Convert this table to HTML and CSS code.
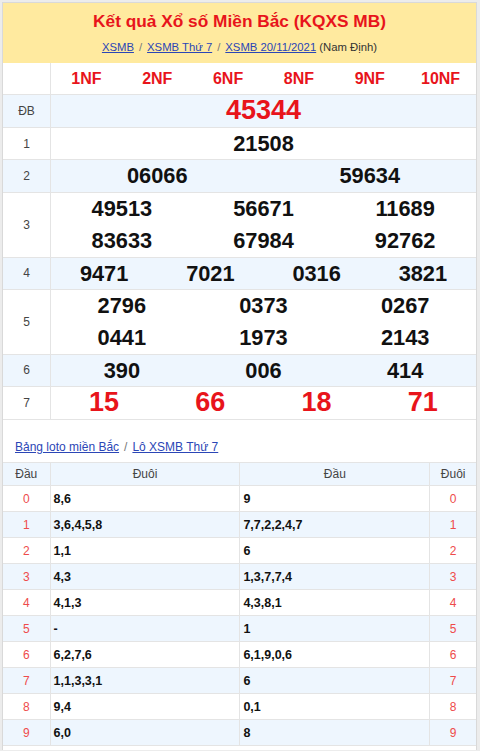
FILE: index.html
```html
<!DOCTYPE html>
<html lang="vi">
<head>
<meta charset="utf-8">
<title>Kết quả Xổ số Miền Bắc</title>
<link rel="stylesheet" href="styles.css">
</head>
<body>
<div class="wrap">
  <div class="head">
    <h1 class="title">Kết quả Xổ số Miền Bắc (KQXS MB)</h1>
    <div class="crumbs"><a href="#">XSMB</a><span class="sep">/</span><a href="#">XSMB Thứ 7</a><span class="sep">/</span><a href="#">XSMB 20/11/2021</a> (Nam Định)</div>
  </div>

  <table class="kq">
    <tr class="nf">
      <td class="lbl"></td>
      <td class="val"><div class="nums c6"><span>1NF</span><span>2NF</span><span>6NF</span><span>8NF</span><span>9NF</span><span>10NF</span></div></td>
    </tr>
    <tr class="alt">
      <td class="lbl">ĐB</td>
      <td class="val"><div class="nums c1 big"><span>45344</span></div></td>
    </tr>
    <tr>
      <td class="lbl">1</td>
      <td class="val"><div class="nums c1"><span>21508</span></div></td>
    </tr>
    <tr class="alt">
      <td class="lbl">2</td>
      <td class="val"><div class="nums c2"><span>06066</span><span>59634</span></div></td>
    </tr>
    <tr>
      <td class="lbl">3</td>
      <td class="val"><div class="nums c3"><span>49513</span><span>56671</span><span>11689</span><span>83633</span><span>67984</span><span>92762</span></div></td>
    </tr>
    <tr class="alt">
      <td class="lbl">4</td>
      <td class="val"><div class="nums c4"><span>9471</span><span>7021</span><span>0316</span><span>3821</span></div></td>
    </tr>
    <tr>
      <td class="lbl">5</td>
      <td class="val"><div class="nums c3"><span>2796</span><span>0373</span><span>0267</span><span>0441</span><span>1973</span><span>2143</span></div></td>
    </tr>
    <tr class="alt">
      <td class="lbl">6</td>
      <td class="val"><div class="nums c3"><span>390</span><span>006</span><span>414</span></div></td>
    </tr>
    <tr>
      <td class="lbl">7</td>
      <td class="val"><div class="nums c4 big"><span>15</span><span>66</span><span>18</span><span>71</span></div></td>
    </tr>
  </table>

  <div class="loto-links"><a href="#">Bảng loto miền Bắc</a><span class="sep">/</span><a href="#">Lô XSMB Thứ 7</a></div>

  <table class="loto">
    <tr class="hd"><td class="d">Đầu</td><td class="t">Đuôi</td><td class="t">Đầu</td><td class="d">Đuôi</td></tr>
    <tr><td class="d">0</td><td class="v">8,6</td><td class="v">9</td><td class="d">0</td></tr>
    <tr class="alt"><td class="d">1</td><td class="v">3,6,4,5,8</td><td class="v">7,7,2,2,4,7</td><td class="d">1</td></tr>
    <tr><td class="d">2</td><td class="v">1,1</td><td class="v">6</td><td class="d">2</td></tr>
    <tr class="alt"><td class="d">3</td><td class="v">4,3</td><td class="v">1,3,7,7,4</td><td class="d">3</td></tr>
    <tr><td class="d">4</td><td class="v">4,1,3</td><td class="v">4,3,8,1</td><td class="d">4</td></tr>
    <tr class="alt"><td class="d">5</td><td class="v">-</td><td class="v">1</td><td class="d">5</td></tr>
    <tr><td class="d">6</td><td class="v">6,2,7,6</td><td class="v">6,1,9,0,6</td><td class="d">6</td></tr>
    <tr class="alt"><td class="d">7</td><td class="v">1,1,3,3,1</td><td class="v">6</td><td class="d">7</td></tr>
    <tr><td class="d">8</td><td class="v">9,4</td><td class="v">0,1</td><td class="d">8</td></tr>
    <tr class="alt"><td class="d">9</td><td class="v">6,0</td><td class="v">8</td><td class="d">9</td></tr>
  </table>
</div>
</body>
</html>
```

FILE: styles.css
```css
html, body {
  margin: 0;
  padding: 0;
}

body {
  background: #ececec;
  font-family: "Liberation Sans", Arial, sans-serif;
  color: #222;
}

.wrap {
  margin: 2px 3px 0 2px;
  border: 1px solid #d9d9d9;
  border-bottom: 0;
  background: #fff;
  padding-bottom: 4px;
}

/* header */
.head {
  background: #ffea9f;
  text-align: center;
  padding: 5px 0 7.5px;
}

.title {
  margin: 0;
  font-size: 17.3px;
  line-height: 27px;
  font-weight: bold;
  color: #e8141b;
}

.crumbs {
  margin-top: 4px;
  font-size: 11.3px;
  line-height: 16px;
  color: #333;
}

.crumbs a,
.loto-links a {
  color: #2b46b6;
  text-decoration: underline;
}

.sep {
  color: #777;
  margin: 0 5px;
}

/* main results table */
.kq {
  width: 100%;
  border-collapse: separate;
  border-spacing: 0;
}

.kq td {
  padding: 0;
  border-bottom: 1px solid #e4e4e4;
}

.kq .lbl {
  width: 47px;
  border-right: 1px solid #e4e4e4;
  text-align: center;
  font-size: 12px;
  color: #444;
}

.kq .alt td {
  background: #eef6fe;
}

.nums {
  display: grid;
  text-align: center;
  font-weight: bold;
  font-size: 21.8px;
  line-height: 31.7px;
  color: #111;
}

.nums.c1 { grid-template-columns: 1fr; }
.nums.c2 { grid-template-columns: repeat(2, 1fr); }
.nums.c3 { grid-template-columns: repeat(3, 1fr); }
.nums.c4 { grid-template-columns: repeat(4, 1fr); }
.nums.c6 { grid-template-columns: repeat(6, 1fr); }

.nums.big {
  font-size: 27px;
  color: #e8141b;
}

.nf .nums {
  font-size: 16px;
  line-height: 31.5px;
  color: #e8141b;
}

/* loto links */
.loto-links {
  padding: 19px 0 0 12px;
  font-size: 12px;
  line-height: 16px;
  margin-bottom: 7px;
}

/* loto table */
.loto {
  width: 100%;
  border-collapse: separate;
  border-spacing: 0;
  border-top: 1px solid #e4e4e4;
  font-size: 12px;
}

.loto td {
  padding: 0;
  height: 25px;
  border-bottom: 1px solid #e4e4e4;
  border-right: 1px solid #e4e4e4;
}

.loto td:last-child {
  border-right: 0;
}

.loto td.d {
  width: 47px;
  text-align: center;
  color: #ee4b4b;
}

.loto td:last-child.d {
  width: 46px;
}

.loto td.v {
  width: 188px;
  padding-left: 3px;
  font-weight: bold;
  font-size: 12.5px;
  color: #111;
}

.loto .hd td {
  height: 22px;
  background: #eef6fe;
  color: #444;
  font-weight: normal;
  text-align: center;
}

.loto .hd td.t {
  width: 188px;
}

.loto .alt td {
  background: #eef6fe;
}
```
